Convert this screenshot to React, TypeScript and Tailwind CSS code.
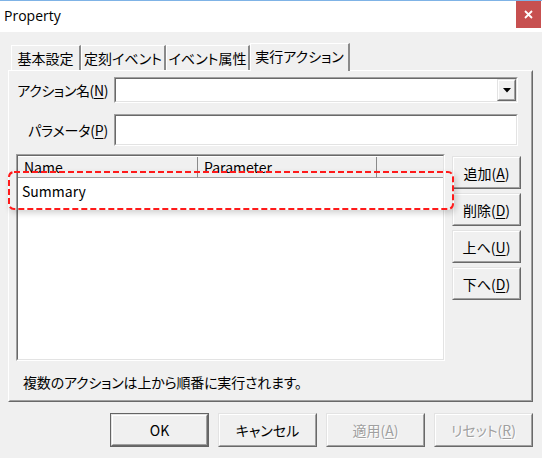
import React from 'react';

const jp = "font-['Noto_Sans_CJK_JP','Noto_Sans',sans-serif] [font-feature-settings:'palt']";

function Key({ k }: { k: string }) {
  return (
    <>
      (<span className="underline underline-offset-2">{k}</span>)
    </>
  );
}

// classic 3D sunken frame (text boxes, list)
function Sunken({ className = '', children }: { className?: string; children?: React.ReactNode }) {
  return (
    <div className={`border border-t-[#a0a0a0] border-l-[#a0a0a0] border-b-white border-r-white ${className}`}>
      <div className="w-full h-full border border-t-[#696969] border-l-[#696969] border-b-[#e3e3e3] border-r-[#e3e3e3] bg-white">
        {children}
      </div>
    </div>
  );
}

// classic 3D raised frame (buttons)
function Raised({ className = '', children }: { className?: string; children?: React.ReactNode }) {
  return (
    <div className={`border border-t-[#e3e3e3] border-l-[#e3e3e3] border-b-[#696969] border-r-[#696969] ${className}`}>
      <div className="w-full h-full flex items-center justify-center border border-t-white border-l-white border-b-[#a0a0a0] border-r-[#a0a0a0] bg-[#f0f0f0]">
        {children}
      </div>
    </div>
  );
}

function SideButton({ label, k }: { label: string; k: string }) {
  return (
    <Raised className="w-[69px] h-[33px]">
      <span className="whitespace-nowrap">
        {label}
        <Key k={k} />
      </span>
    </Raised>
  );
}

function DialogButton({ children, primary, disabled }: { children: React.ReactNode; primary?: boolean; disabled?: boolean }) {
  const text = disabled ? 'text-[#a0a0a0] [text-shadow:1px_1px_0_#ffffff]' : 'text-black';
  if (primary) {
    return (
      <div className="w-[99px] h-[34px] border border-[#646464]">
        <Raised className="w-full h-full">
          <span className={text}>{children}</span>
        </Raised>
      </div>
    );
  }
  return (
    <Raised className="w-[99px] h-[34px]">
      <span className={`whitespace-nowrap ${text}`}>{children}</span>
    </Raised>
  );
}

const tabs = [
  { label: '基本設定', w: 'w-[70px]' },
  { label: '定刻イベント', w: 'w-[85px]' },
  { label: 'イベント属性', w: 'w-[84px]' },
];

export default function App() {
  return (
    <div className={`relative w-[542px] h-[458px] overflow-hidden bg-[#f0f0f0] text-black text-[14px] leading-[20px] ${jp}`}>
      {/* title bar */}
      <div className="h-[32px] border-t border-[#7fb3e6] bg-white flex items-start justify-between">
        <span className="pl-[4px] pt-[5px] font-['Open_Sans',sans-serif] text-[14px] leading-[20px] [font-feature-settings:normal]">
          Property
        </span>
        <div className="w-[25px] h-[27px] mr-[1px] bg-[#c75050] flex items-center justify-center">
          <svg width="9" height="9" viewBox="0 0 9 9">
            <path d="M1 1L8 8M8 1L1 8" stroke="#ffffff" strokeWidth="1.8" />
          </svg>
        </div>
      </div>

      <div className="pl-[8px] pt-[11px]">
        {/* tabs */}
        <div className="flex items-end h-[27px] pl-[3px]">
          {tabs.map((t) => (
            <div
              key={t.label}
              className={`${t.w} h-[25px] border-t border-l border-t-white border-l-white border-r-2 border-r-[#8a8a8a] flex items-center justify-center whitespace-nowrap`}
            >
              {t.label}
            </div>
          ))}
          <div className="relative z-10 w-[100px] h-[28px] -mb-[1px] bg-[#f0f0f0] border-t border-l border-t-white border-l-white border-r-2 border-r-[#8a8a8a] flex items-start justify-center pt-[2px] whitespace-nowrap">
            実行アクション
          </div>
        </div>

        {/* tab page */}
        <div className="w-[525px] h-[332px] border border-t-white border-l-white border-b-[#696969] border-r-[#696969]">
          <div className="w-full h-full border border-t-[#f0f0f0] border-l-[#f0f0f0] border-b-[#a0a0a0] border-r-[#a0a0a0] pt-[5px] pl-[6px]">
            <div className="grid grid-cols-[92px_404px] gap-x-[6px] gap-y-[11px]">
              <div className="h-[26px] flex items-center justify-end whitespace-nowrap tracking-[-0.4px]">
                アクション名<Key k="N" />
              </div>
              <Sunken className="h-[26px]">
                <div className="flex h-full justify-end">
                  <Raised className="w-[19px] h-full">
                    <svg width="8" height="5" viewBox="0 0 8 5">
                      <path d="M0 0H8L4 4.5Z" fill="#000000" />
                    </svg>
                  </Raised>
                </div>
              </Sunken>
              <div className="h-[32px] flex items-center justify-end whitespace-nowrap tracking-[-0.2px]">
                パラメータ<Key k="P" />
              </div>
              <Sunken className="h-[32px]" />
            </div>

            <div className="flex mt-[8px] gap-[7px]">
              <Sunken className="w-[429px] h-[207px]">
                <div className="flex h-[22px] bg-[#f0f0f0] border-t border-t-white">
                  <div className="w-[180px] border-r border-r-[#8a8a8a] border-b border-b-[#a0a0a0] pl-[6px] flex items-center">Name</div>
                  <div className="w-[179px] border-r border-r-[#8a8a8a] border-b border-b-[#a0a0a0] pl-[6px] flex items-center">Parameter</div>
                  <div className="flex-1 border-b border-b-[#a0a0a0]" />
                </div>
                <div className="pl-[4px] pt-[3px]">Summary</div>
              </Sunken>
              <div className="flex flex-col gap-[4px] mt-[2px]">
                <SideButton label="追加" k="A" />
                <SideButton label="削除" k="D" />
                <SideButton label="上へ" k="U" />
                <SideButton label="下へ" k="D" />
              </div>
            </div>

            <div className="mt-[11px] pl-[7px] tracking-[-0.2px]">複数のアクションは上から順番に実行されます。</div>
          </div>
        </div>

        {/* dialog buttons */}
        <div className="flex justify-end gap-[9px] mt-[11px] pr-[9px]">
          <DialogButton primary>OK</DialogButton>
          <DialogButton>キャンセル</DialogButton>
          <DialogButton disabled>
            適用<Key k="A" />
          </DialogButton>
          <DialogButton disabled>
            リセット<Key k="R" />
          </DialogButton>
        </div>
      </div>

      {/* red dashed annotation over the list row */}
      <div className="absolute left-[8px] top-[171px] w-[446px] h-[39px] rounded-[6px] shadow-[2px_3px_6px_rgba(0,0,0,0.18)]" />
      <svg className="absolute left-[8px] top-[171px]" width="446" height="39" viewBox="0 0 446 39">
        <rect x="1" y="1" width="444" height="37" rx="5" fill="none" stroke="#ff1a1a" strokeWidth="2" strokeDasharray="6 3" />
      </svg>
    </div>
  );
}
